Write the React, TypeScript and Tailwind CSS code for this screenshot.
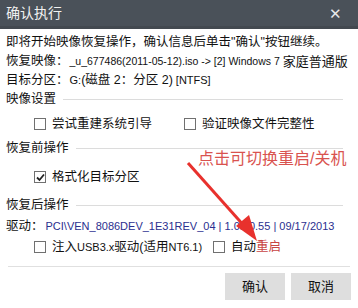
import React from 'react';

const font = { fontFamily: '"Liberation Sans", "Noto Sans CJK SC", sans-serif' };

const Box = ({ checked = false }: { checked?: boolean }) => (
  <span className="inline-flex w-[12px] h-[12px] border border-[#707070] bg-white items-center justify-center shrink-0">
    {checked && (
      <svg width="9" height="9" viewBox="0 0 9 9">
        <path d="M1 4.5 L3.5 7 L8 1.5" stroke="#222" strokeWidth="1.8" fill="none" />
      </svg>
    )}
  </span>
);

const Section = ({ title }: { title: string }) => (
  <div className="flex items-center h-[19px] pr-[15px]">
    <span>{title}</span>
    <span className="flex-1 h-px bg-[#dcdcdc] ml-[7px]" />
  </div>
);

const App: React.FC = () => {
  return (
    <div className="relative w-[358px] h-[308px] bg-white text-[12.5px] text-[#111] leading-none overflow-hidden" style={font}>
      <div className="h-[29px] bg-[#4a5159] border-b-[3px] border-[#434950] flex items-center justify-between pl-[6px] pr-[16px]">
        <span className="text-[#f2f2f2] text-[14px]">确认执行</span>
        <span className="text-[#e8e8e8] text-[15px] font-light">✕</span>
      </div>

      <div className="pl-[6px] pt-[4px] flex flex-col">
        <div className="h-[19px] flex items-center whitespace-nowrap">即将开始映像恢复操作，确认信息后单击"确认"按钮继续。</div>
        <div className="h-[19px] flex items-center whitespace-nowrap">
          <span>恢复映像：</span>
          <span className="text-[10.5px] ml-[1px] mr-[3px]">_u_677486(2011-05-12).iso -&gt; [2] Windows 7</span>
          <span className="text-[13px]">家庭普通版</span>
        </div>
        <div className="h-[19px] flex items-center whitespace-nowrap">
          <span>目标分区：</span>
          <span className="text-[11px] ml-[1px]">G:</span>
          <span>(磁盘 2：分区 2)</span>
          <span className="text-[11px] ml-[3px]">[NTFS]</span>
        </div>
        <Section title="映像设置" />
        <div className="h-[30px] flex items-center">
          <label className="w-[178px] flex items-center gap-[6px] pl-[28px]"><Box /><span>尝试重建系统引导</span></label>
          <label className="flex items-center gap-[6px]"><Box /><span>验证映像文件完整性</span></label>
        </div>
        <Section title="恢复前操作" />
        <div className="h-[38px] flex items-center">
          <label className="flex items-center gap-[6px] pl-[28px]"><Box checked /><span>格式化目标分区</span></label>
        </div>
        <Section title="恢复后操作" />
        <div className="h-[22px] flex items-center whitespace-nowrap">
          <span>驱动：</span>
          <span className="text-[#2b2f8f] text-[11px] ml-[2px]">PCI\VEN_8086DEV_1E31REV_04 | 1.0.10.55 | 09/17/2013</span>
        </div>
        <div className="h-[20px] flex items-center whitespace-nowrap">
          <label className="w-[207px] flex items-center gap-[6px] pl-[28px]">
            <Box />
            <span>注入<span className="text-[11px]">USB3.x</span>驱动(适用<span className="text-[11px]">NT6.1)</span></span>
          </label>
          <label className="flex items-center gap-[6px]">
            <Box />
            <span>自动<span className="text-[#c84444]">重启</span></span>
          </label>
        </div>
      </div>

      <div className="mx-[8px] mt-[9px] h-px bg-[#e0e0e0]" />
      <div className="flex justify-end gap-[6px] pr-[7px] pt-[6px]">
        <button className="w-[60px] h-[27px] bg-[#dedede] text-[13px]">确认</button>
        <button className="w-[60px] h-[27px] bg-[#dedede] text-[13px]">取消</button>
      </div>

      <span className="absolute left-[198px] top-[151px] text-[16px] leading-none text-[#d9534f]">点击可切换重启/关机</span>
      <svg className="absolute left-0 top-0 pointer-events-none" width="358" height="308">
        <line x1="188" y1="163" x2="246" y2="228" stroke="#e8312d" strokeWidth="3" />
        <polygon points="257,241 236,226 249,215" fill="#e8312d" />
      </svg>
    </div>
  );
};

export default App;
